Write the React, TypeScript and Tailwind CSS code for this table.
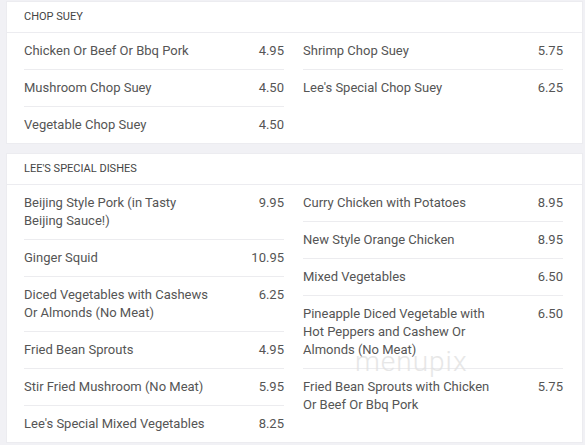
import React from "react";

type Item = { name: string; price: string };

const chopLeft: Item[] = [
  { name: "Chicken Or Beef Or Bbq Pork", price: "4.95" },
  { name: "Mushroom Chop Suey", price: "4.50" },
  { name: "Vegetable Chop Suey", price: "4.50" },
];
const chopRight: Item[] = [
  { name: "Shrimp Chop Suey", price: "5.75" },
  { name: "Lee's Special Chop Suey", price: "6.25" },
];
const leeLeft: Item[] = [
  { name: "Beijing Style Pork (in Tasty Beijing Sauce!)", price: "9.95" },
  { name: "Ginger Squid", price: "10.95" },
  { name: "Diced Vegetables with Cashews Or Almonds (No Meat)", price: "6.25" },
  { name: "Fried Bean Sprouts", price: "4.95" },
  { name: "Stir Fried Mushroom (No Meat)", price: "5.95" },
  { name: "Lee's Special Mixed Vegetables", price: "8.25" },
];
const leeRight: Item[] = [
  { name: "Curry Chicken with Potatoes", price: "8.95" },
  { name: "New Style Orange Chicken", price: "8.95" },
  { name: "Mixed Vegetables", price: "6.50" },
  { name: "Pineapple Diced Vegetable with Hot Peppers and Cashew Or Almonds (No Meat)", price: "6.50" },
  { name: "Fried Bean Sprouts with Chicken Or Beef Or Bbq Pork", price: "5.75" },
];

function Column({ items }: { items: Item[] }) {
  return (
    <div className="flex flex-col">
      {items.map((it, i) => (
        <div
          key={i}
          className={
            "flex justify-between py-[9px] " +
            (i < items.length - 1 ? "border-b border-[#ececef]" : "")
          }
        >
          <div className="w-[193px] text-[13px] leading-[18px] text-[#555]">{it.name}</div>
          <div className="text-[13px] leading-[18px] text-[#555]">{it.price}</div>
        </div>
      ))}
    </div>
  );
}

function Section({ title, left, right }: { title: string; left: Item[]; right: Item[] }) {
  return (
    <div className="bg-white border border-[#ececf0]">
      <div className="h-[31px] pt-[1px] flex items-center px-[17px] border-b border-[#ececf0] text-[11px] text-[#444] uppercase">
        {title}
      </div>
      <div className="grid grid-cols-[260px_260px] gap-x-[19px] px-[17px]">
        <Column items={left} />
        <Column items={right} />
      </div>
    </div>
  );
}

export default function App() {
  return (
    <div
      className="relative w-[585px] h-[445px] bg-[#f1f1f5] pl-[6px] pr-[2px] pt-[1px] flex flex-col gap-[9px] overflow-hidden"
      style={{ fontFamily: 'Roboto, "Liberation Sans", Arial, sans-serif' }}
    >
      <Section title="Chop Suey" left={chopLeft} right={chopRight} />
      <Section title="Lee's Special Dishes" left={leeLeft} right={leeRight} />
      <div className="absolute left-[355px] top-[354px] text-[28px] leading-[16px] font-light tracking-[1px] text-[#e2e2e2] opacity-80 pointer-events-none">
        menupix
      </div>
    </div>
  );
}
